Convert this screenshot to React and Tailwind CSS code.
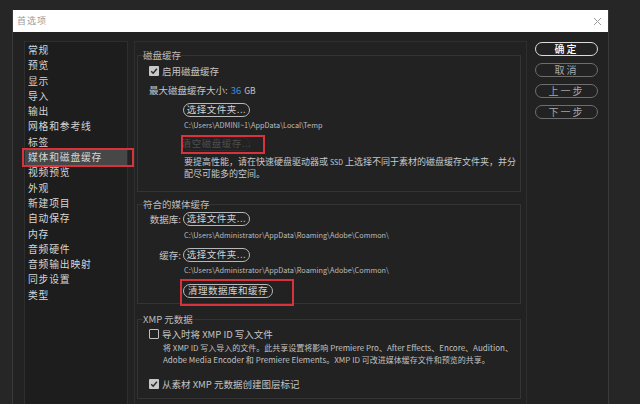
import React from "react";

const menuItems = [
  "常规",
  "预览",
  "显示",
  "导入",
  "输出",
  "网格和参考线",
  "标签",
  "媒体和磁盘缓存",
  "视频预览",
  "外观",
  "新建项目",
  "自动保存",
  "内存",
  "音频硬件",
  "音频输出映射",
  "同步设置",
  "类型",
];

const Check = ({ checked }) =>
  checked ? (
    <span className="w-[10px] h-[10px] rounded-[1px] bg-[#c8c8c8] flex items-center justify-center shrink-0">
      <svg width="8" height="8" viewBox="0 0 8 8">
        <path d="M1.2 4.2 L3.2 6.2 L6.9 1.8" stroke="#2a2a2a" strokeWidth="1.5" fill="none" />
      </svg>
    </span>
  ) : (
    <span className="w-[10px] h-[10px] rounded-[1px] border-[1.5px] border-[#c0c0c0] shrink-0" />
  );

const Pill = ({ children, className = "", disabled }) => (
  <div
    className={`h-[14px] rounded-full border flex items-center justify-center whitespace-nowrap text-[9.5px] leading-none tracking-[0.5px] ${
      disabled ? "border-[#2c2c2c] text-[#4e4e4e]" : "border-[#b8b8b8] text-[#d4d4d4]"
    } ${className}`}
  >
    {children}
  </div>
);

const Section = ({ title, className = "", children }) => (
  <fieldset className={`border border-[#343434] ml-[2px] mr-[5px] px-0 ${className}`}>
    <legend className="ml-[5px] text-[9.5px] leading-[12px] text-[#bdbdbd] whitespace-nowrap">{title}</legend>
    <div className="pl-[11px] whitespace-nowrap">{children}</div>
  </fieldset>
);

const SideButton = ({ children, primary }) => (
  <div
    className={`h-[14px] w-[63px] rounded-full border flex items-center justify-center text-[10px] leading-none tracking-[2px] ${
      primary ? "border-[#dcdcdc] text-white font-medium" : "border-[#6e6e6e] text-[#a8a8a8]"
    }`}
  >
    {children}
  </div>
);

export default function App() {
  return (
    <div className="w-[640px] h-[404px] overflow-hidden bg-[#262626] font-['Noto_Sans_CJK_SC','Noto_Sans',sans-serif] pt-[10px]">
      <div className="ml-[12px] w-[597px] h-[420px] border-x border-[#3a3a3a] bg-[#222222]">
        {/* title bar */}
        <div className="h-[22px] bg-white flex items-center justify-between pl-[4px] pr-[6px]">
          <span className="text-[9px] text-[#9a9a9a] tracking-[1px]">首选项</span>
          <svg width="9" height="9" viewBox="0 0 9 9">
            <path d="M1 1 L8 8 M8 1 L1 8" stroke="#9a9a9a" strokeWidth="1" />
          </svg>
        </div>

        <div className="flex items-start pt-[9px]">
          {/* sidebar */}
          <div className="ml-[11px] w-[104px] h-[380px] border border-[#2e2e2e] bg-[#1d1d1d] pt-[1px]">
            {menuItems.map((item, i) => (
              <div
                key={item}
                className={`relative h-[15.3px] leading-[15.3px] pl-[3px] text-[9.8px] tracking-[0.8px] text-[#d6d6d6] whitespace-nowrap ${
                  i === 7 ? "bg-[#474747]" : ""
                }`}
              >
                {item}
                {i === 7 && (
                  <div className="absolute -left-[3px] -top-[2px] w-[112px] h-[19px] border-2 border-[#d8323c]" />
                )}
              </div>
            ))}
          </div>

          {/* content */}
          <div className="ml-[6px] w-[393px] h-[380px] border border-[#2e2e2e] pt-[7px] text-[#c4c4c4]">
            <Section title="磁盘缓存">
              <div className="mt-[3px] h-[14px] flex items-center gap-[3px] text-[9.5px]">
                <Check checked />
                <span>启用磁盘缓存</span>
              </div>
              <div className="mt-[5px] h-[14px] flex items-center text-[9.5px]">
                <span>最大磁盘缓存大小:</span>
                <span className="ml-[3px] text-[#3d8fdc]">36</span>
                <span className="ml-[3px] text-[8.5px]">GB</span>
              </div>
              <Pill className="mt-[6px] ml-[34px] w-[67px]">选择文件夹...</Pill>
              <div className="mt-[2px] ml-[35px] h-[12px] leading-[12px] text-[7.3px] text-[#bdbdbd]">
                C:\Users\ADMINI~1\AppData\Local\Temp
              </div>
              <div className="relative mt-[6px] ml-[34px] w-[67px]">
                <Pill disabled className="w-[67px]">清空磁盘缓存...</Pill>
                <div className="absolute -left-[2px] -top-[2px] w-[84px] h-[19px] border-2 border-[#d8323c]" />
              </div>
              <div className="mt-[5px] ml-[35px] text-[9px] leading-[12px] text-[#c8c8c8] pb-[11px]">
                <div>要提高性能，请在快速硬盘驱动器或 <span className="text-[7px]">SSD</span> 上选择不同于素材的磁盘缓存文件夹，并分</div>
                <div>配尽可能多的空间。</div>
              </div>
            </Section>

            <Section title="符合的媒体缓存" className="mt-[6px]">
              <div className="mt-[2px] h-[14px] flex items-center">
                <span className="w-[34px] text-right pr-[2px] text-[9.5px]">数据库:</span>
                <Pill className="w-[67px]">选择文件夹...</Pill>
              </div>
              <div className="mt-[3px] ml-[35px] h-[12px] leading-[12px] text-[7.3px] text-[#bdbdbd]">
                C:\Users\Administrator\AppData\Roaming\Adobe\Common\
              </div>
              <div className="mt-[7px] h-[14px] flex items-center">
                <span className="w-[34px] text-right pr-[2px] text-[9.5px]">缓存:</span>
                <Pill className="w-[67px]">选择文件夹...</Pill>
              </div>
              <div className="mt-[2px] ml-[35px] h-[12px] leading-[12px] text-[7.3px] text-[#bdbdbd]">
                C:\Users\Administrator\AppData\Roaming\Adobe\Common\
              </div>
              <div className="relative mt-[8px] ml-[34px] w-[90px] mb-[5px]">
                <Pill className="w-[90px]">清理数据库和缓存</Pill>
                <div className="absolute -left-[3px] -top-[5px] w-[114px] h-[27px] border-2 border-[#d8323c]" />
              </div>
            </Section>

            <Section title="XMP 元数据" className="mt-[9px]">
              <div className="mt-[2px] h-[14px] flex items-center gap-[3px] text-[9.5px]">
                <Check />
                <span>导入时将 XMP ID 写入文件</span>
              </div>
              <div className="mt-[1px] ml-[14px] text-[8px] leading-[12px] text-[#c0c0c0]">
                <div>将 XMP ID 写入导入的文件。此共享设置将影响 Premiere Pro、After Effects、Encore、Audition、</div>
                <div>Adobe Media Encoder 和 Premiere Elements。XMP ID 可改进媒体缓存文件和预览的共享。</div>
              </div>
              <div className="mt-[11px] h-[14px] flex items-center gap-[3px] text-[9.5px] mb-[7px]">
                <Check checked />
                <span>从素材 XMP 元数据创建图层标记</span>
              </div>
            </Section>
          </div>

          {/* buttons */}
          <div className="ml-[8px] pt-[1px] flex flex-col gap-[7px]">
            <SideButton primary>确定</SideButton>
            <SideButton>取消</SideButton>
            <SideButton>上一步</SideButton>
            <SideButton>下一步</SideButton>
          </div>
        </div>
      </div>
    </div>
  );
}
